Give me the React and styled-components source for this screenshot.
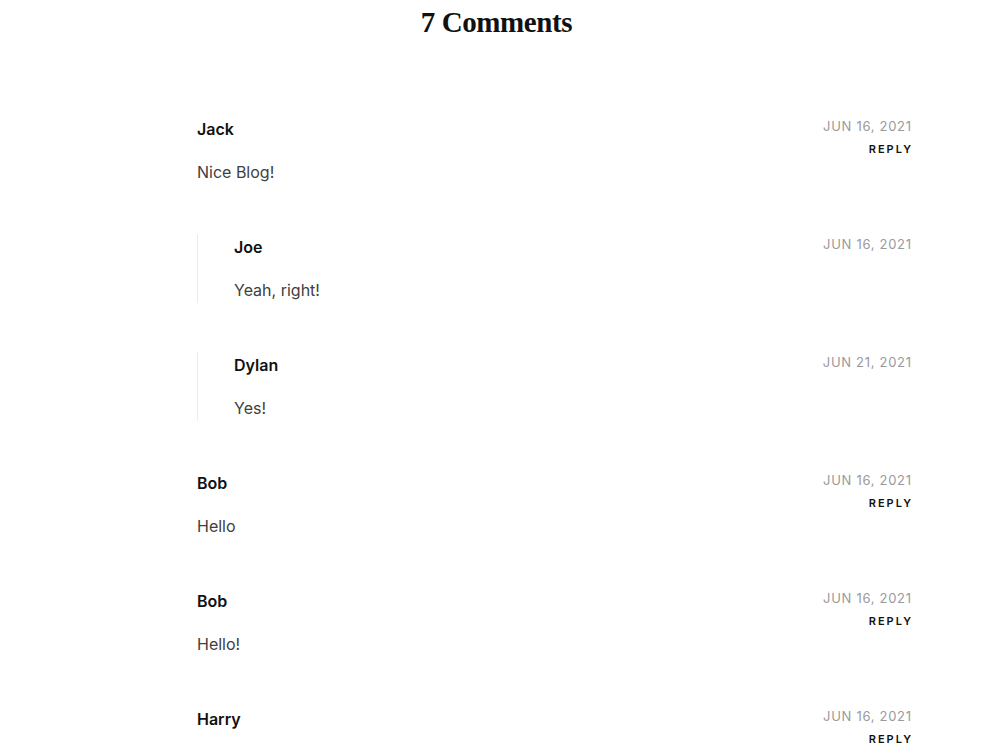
import React from "react";
import styled, { createGlobalStyle } from "styled-components";

const Global = createGlobalStyle`
  html, body { margin: 0; padding: 0; background: #fff; }
  body { font-family: Inter, "Noto Sans", sans-serif; }
`;

const Page = styled.div`
  width: 1000px;
  padding-bottom: 60px;
`;

const Title = styled.h2`
  margin: 0;
  padding: 4px 7px 0 0;
  text-align: center;
  font-family: "Liberation Serif", "DejaVu Serif", serif;
  font-weight: 700;
  font-size: 29px;
  line-height: 36px;
  color: #111;
  letter-spacing: -0.4px;
`;

const List = styled.div`
  display: flex;
  flex-direction: column;
  gap: 49px;
  margin: 76px 89px 0 197px;
`;

const Item = styled.div`
  display: flex;
  justify-content: space-between;
  align-items: flex-start;
  border-left: ${(p) => (p.$nested ? "1px solid #ececec" : "none")};
  padding-left: ${(p) => (p.$nested ? "36px" : "0")};
`;

const Main = styled.div`
  display: flex;
  flex-direction: column;
  gap: 17px;
`;

const Name = styled.div`
  font-size: 16px;
  line-height: 26px;
  font-weight: 600;
  color: #111;
`;

const Body = styled.div`
  font-size: 16px;
  line-height: 26px;
  color: #404040;
`;

const Meta = styled.div`
  display: flex;
  flex-direction: column;
  align-items: flex-end;
  gap: 3px;
`;

const Date = styled.div`
  font-size: 13px;
  line-height: 20px;
  letter-spacing: 0.7px;
  color: #9a9a9a;
  margin-right: -0.7px;
`;

const Reply = styled.a`
  font-size: 11px;
  line-height: 20px;
  font-weight: 600;
  letter-spacing: 2px;
  color: #111;
  text-decoration: none;
  margin-right: -2px;
  cursor: pointer;
`;

const comments = [
  { name: "Jack", date: "JUN 16, 2021", text: "Nice Blog!", reply: true },
  { name: "Joe", date: "JUN 16, 2021", text: "Yeah, right!", nested: true },
  { name: "Dylan", date: "JUN 21, 2021", text: "Yes!", nested: true },
  { name: "Bob", date: "JUN 16, 2021", text: "Hello", reply: true },
  { name: "Bob", date: "JUN 16, 2021", text: "Hello!", reply: true },
  { name: "Harry", date: "JUN 16, 2021", text: "Great post!", reply: true },
  { name: "Anna", date: "JUN 17, 2021", text: "Thanks for sharing.", reply: true },
];

export default function App() {
  return (
    <Page>
      <Global />
      <Title>7 Comments</Title>
      <List>
        {comments.map((c, i) => (
          <Item key={i} $nested={c.nested}>
            <Main>
              <Name>{c.name}</Name>
              <Body>{c.text}</Body>
            </Main>
            <Meta>
              <Date>{c.date}</Date>
              {c.reply && <Reply>REPLY</Reply>}
            </Meta>
          </Item>
        ))}
      </List>
    </Page>
  );
}
